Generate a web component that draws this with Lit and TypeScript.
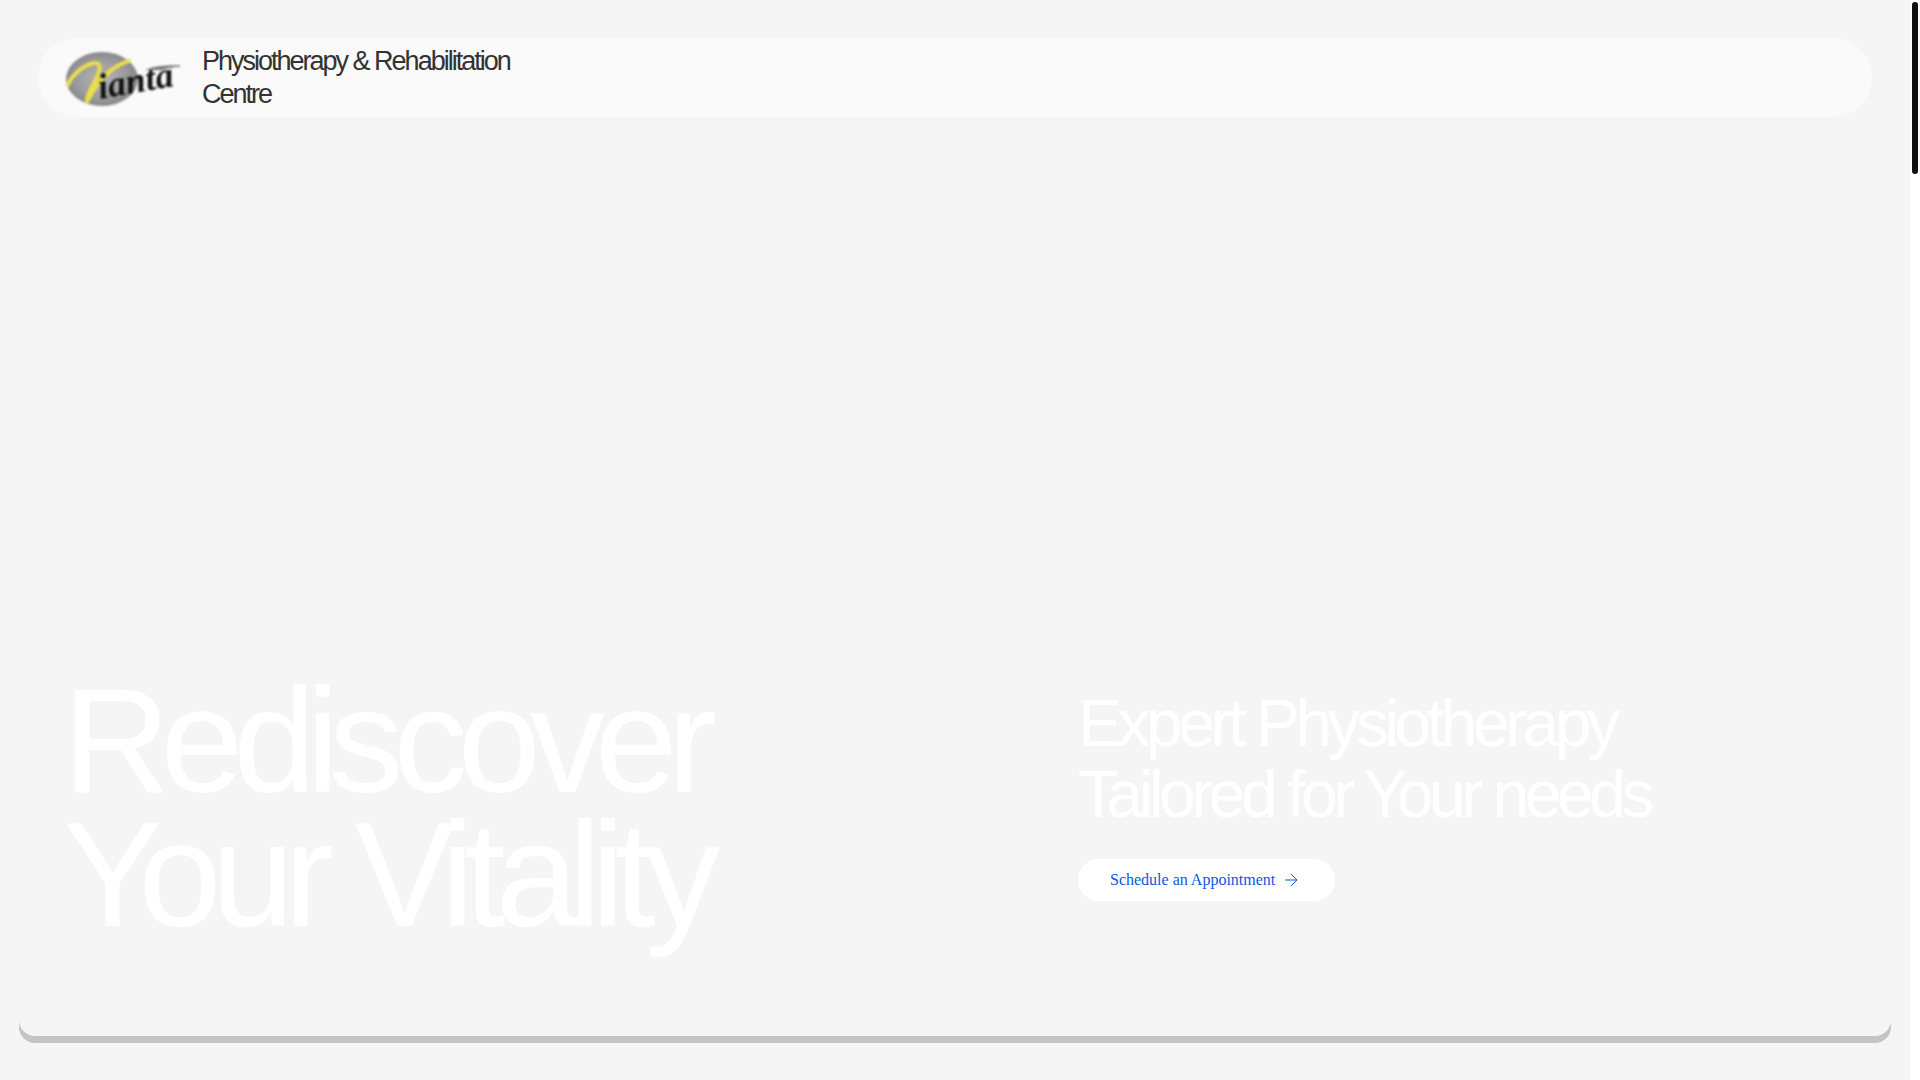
import { LitElement, html, css, svg } from "lit";
import { customElement } from "lit/decorators.js";

const arrow = svg`<path d="M2 8h12M8 2l6 6-6 6" fill="none" stroke="currentColor" stroke-width="1" />`;

@customElement("vianta-logo")
class ViantaLogo extends LitElement {
  static styles = css`
    :host { display: block; flex: none; }
    svg { display: block; width: 126px; height: 72px; }
    .art { filter: blur(0.8px); }
    .script { font: italic 700 36px "Liberation Serif", serif; fill: #111; }
  `;
  render() {
    return html`<svg viewBox="0 0 126 72" role="img" aria-label="Vianta">
      <defs>
        <radialGradient id="disc">
          <stop offset="0" stop-color="#b4b4b4" />
          <stop offset="0.7" stop-color="#9c9c9e" />
          <stop offset="1" stop-color="#88888a" />
        </radialGradient>
      </defs>
      <g class="art">
        <ellipse cx="42" cy="37" rx="36" ry="27" fill="url(#disc)" />
        <path d="M8 43C11 34 24 22 35 21C44 21 38 34 33 43Q27 53 27 60C35 43 50 24 69 19" fill="none" stroke="#eadf4c" stroke-width="4" stroke-linecap="round" stroke-linejoin="round" />
        <text class="script" x="40" y="57" transform="rotate(-10 40 57)">ianta</text>
        <path d="M86 28Q99 23 120 24Q108 25 100 28" fill="#777" stroke="#777" stroke-width="1" stroke-linejoin="round" />
      </g>
    </svg>`;
  }
}

@customElement("app-root")
class AppRoot extends LitElement {
  static styles = css`
    :host {
      display: flex;
      min-height: 100vh;
      background: #fff;
      font-family: "Liberation Sans", Arial, sans-serif;
    }
    * { box-sizing: border-box; }
    h1, h2, p { margin: 0; font-weight: 400; letter-spacing: -0.068em; }
    .page {
      flex: 1;
      display: flex;
      padding: 19px 19px 44px;
      background: #f5f5f5;
    }
    .hero {
      flex: 1;
      display: flex;
      flex-direction: column;
      justify-content: space-between;
      padding: 19px 19px 94px;
      border-radius: 16px;
      background: #f5f5f5;
      box-shadow: 0 7px 0 #c4c4c4;
    }
    .bar {
      display: flex;
      align-items: center;
      gap: 16px;
      padding: 4px 22px 3px;
      border-radius: 40px;
      background: #fafafa;
    }
    .brand { max-width: 340px; font-size: 27px; line-height: 33px; letter-spacing: -2px; color: #333; }
    .intro {
      display: grid;
      grid-template-columns: 1015fr 769fr;
      align-items: end;
      padding: 0 25px;
      color: #fff;
    }
    h1 { font-size: 149px; line-height: 134px; }
    .side { padding-bottom: 41px; }
    h2 { margin-bottom: 29px; font-size: 66px; line-height: 71px; }
    .cta {
      display: inline-flex;
      align-items: center;
      gap: 8px;
      height: 42px;
      padding: 0 36px 0 32px;
      border-radius: 21px;
      background: #fff;
      color: #0f56dc;
      font: 16px "Liberation Serif", serif;
      text-decoration: none;
      vertical-align: top;
    }
    .cta svg { width: 16px; height: 16px; }
    .scroll { flex: none; width: 10px; padding: 2px; background: #fff; }
    .thumb { height: 172px; border-radius: 3px; background: #111; }
  `;
  render() {
    return html`
      <main class="page">
        <section class="hero">
          <header class="bar">
            <vianta-logo></vianta-logo>
            <p class="brand">Physiotherapy &amp; Rehabilitation Centre</p>
          </header>
          <div class="intro">
            <h1>Rediscover<br />Your Vitality</h1>
            <div class="side">
              <h2>Expert Physiotherapy<br />Tailored for Your needs</h2>
              <a class="cta" href="#appointment">Schedule an Appointment
                <svg viewBox="0 0 16 16" aria-hidden="true">${arrow}</svg>
              </a>
            </div>
          </div>
        </section>
      </main>
      <div class="scroll"><div class="thumb"></div></div>
    `;
  }
}
